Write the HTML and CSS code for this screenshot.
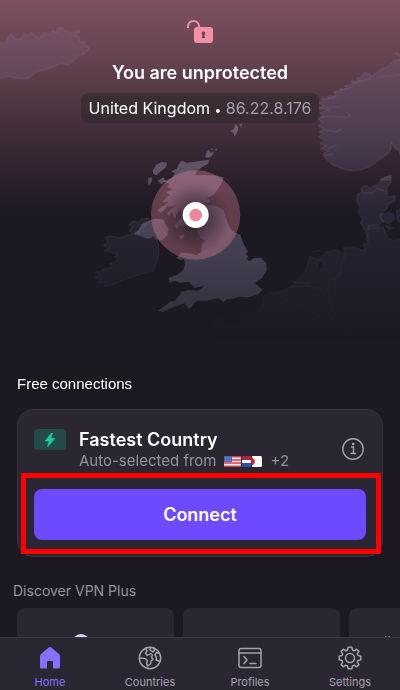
FILE: index.html
```
<!DOCTYPE html>
<html lang="en">

    <head>
        <meta charset="UTF-8">
        <meta name="viewport" content="width=device-width, initial-scale=1.0">
        <title>VPN</title>
        <link rel="stylesheet" href="styles.css">
    </head>

    <body>
        <div class="app">
            <main class="content">
                <svg class="map" viewBox="0 0 1200 1080" preserveAspectRatio="xMidYMin slice" aria-hidden="true">
                    <defs>
                        <linearGradient id="landFade" gradientUnits="userSpaceOnUse" x1="0" y1="0" x2="0" y2="1020">
                            <stop offset="0" stop-color="#fff" stop-opacity=".6" />
                            <stop offset=".4" stop-color="#fff" stop-opacity="1" />
                            <stop offset=".65" stop-color="#fff" stop-opacity=".6" />
                            <stop offset="1" stop-color="#fff" stop-opacity="0" />
                        </linearGradient>
                        <linearGradient id="ukFade" gradientUnits="userSpaceOnUse" x1="0" y1="450" x2="0" y2="990">
                            <stop offset="0" stop-color="#fff" stop-opacity="1" />
                            <stop offset=".6" stop-color="#fff" stop-opacity=".7" />
                            <stop offset="1" stop-color="#fff" stop-opacity=".35" />
                        </linearGradient>
                        <mask id="landMask" maskUnits="userSpaceOnUse" x="-10" y="0" width="1220" height="1080">
                            <rect x="-10" width="1220" height="1080" fill="url(#landFade)" />
                        </mask>
                        <mask id="ukMask" maskUnits="userSpaceOnUse" x="0" y="0" width="1200" height="1080">
                            <rect width="1200" height="1080" fill="url(#ukFade)" />
                        </mask>
                        <radialGradient id="shade">
                            <stop offset=".2" stop-color="#1c1924" stop-opacity=".65" />
                            <stop offset="1" stop-color="#1c1924" stop-opacity="0" />
                        </radialGradient>
                    </defs>

                    <g class="land" mask="url(#landMask)">
                        <!-- Iceland -->
                        <path d="M-5 126L16 132L22 112L34 102L46 118L58 119L72 100L84 106L92 98L106 106L116 118L132 98L148 102L160 92L170 100L172 86L186 82L196 92L214 98L240 92L224 106L240 112L236 124L256 124L250 132L268 142L262 154L248 158L254 162L240 166L218 184L204 194L180 192L140 208L112 214L84 236L60 237L26 230L-5 234Z" />
                        <!-- Norway and Sweden -->
                        <path d="M1205 166L1185 158L1205 176L1180 184L1162 200L1140 210L1128 222L1108 230L1112 222L1092 218L1084 232L1070 236L1078 244L1054 244L1060 254L1034 256L1042 266L1020 266L1026 278L1002 276L1008 288L982 288L988 298L966 294L972 306L956 308L972 318L956 324L990 330L958 338L974 348L955 356L966 366L954 378L972 386L958 396L970 402L956 410L976 420L960 430L978 438L960 446L990 452L970 460L976 474L996 494L1020 504L1050 512L1084 509L1110 500L1140 478L1162 462L1172 450L1174 426L1184 444L1196 450L1205 476Z" />
                        <path class="fjord" d="M956 326L1020 320M960 350L1040 352L1052 346L1040 336M974 390L1010 396L1030 384M984 446L1010 434M960 300L1010 290M1000 276L1060 262M1060 250L1110 236M1130 230L1205 224M974 466L1000 462" />
                        <path d="M1140 540L1150 532L1172 528L1168 540Z" />

                        <g transform="translate(600 480)">
                            <!-- Denmark -->
                            <path d="M502 248L500 222L492 208L482 190L488 176L474 160L480 140L470 124L474 100L486 98L482 84L496 76L510 84L534 74L544 58L574 46L572 68L560 82L562 100L560 112L586 108L584 124L566 130L560 148L546 156L540 170L552 184L534 196L510 194L502 206Z" />
                            <path d="M540 164L560 158L580 162L584 180L564 190L546 182ZM590 150L605 146L605 190L592 182ZM556 196L580 204L568 208Z" />
                            <!-- Continent -->
                            <path d="M605 236L580 242L564 234L554 214L550 202L506 196L504 228L508 250L490 252L494 272L464 262L430 262L436 282L410 270L376 276L360 292L372 318L360 332L352 314L362 300L330 290L318 330L296 358L272 380L236 396L204 400L190 412L188 440L160 458L130 484L100 496L66 494L64 474L44 474L50 520L40 545L605 545Z" />
                            <path class="fjord" d="M436 282L422 318L420 346L388 362L384 388L390 420L396 446L382 458L412 500L470 515M236 398L250 416L286 424L304 440L330 448L348 466L380 480M272 380L320 378L356 384L380 404M280 366L330 370M334 276L360 272M486 98L520 100L528 86M530 84L560 96M500 206L540 204" />
                        </g>

                        <!-- Ireland -->
                        <path transform="translate(240 330)" d="M160 372L146 362L160 350L145 346L156 334L176 336L184 326L204 324L212 330L196 350L180 358L176 376L204 384L224 380L236 400L237 430L228 462L220 484L190 490L160 500L130 510L100 524L72 528L78 518L54 518L64 508L45 504L60 494L46 486L70 484L66 478L96 474L88 462L112 452L104 440L116 436L100 430L72 422L90 414L70 406L84 396L76 382L96 378L120 384L142 376Z" />
                    </g>

                    <!-- United Kingdom -->
                    <g class="uk" mask="url(#ukMask)">
                        <g transform="translate(240 330)">
                            <path d="M305 152L320 158L345 155L388 149L384 162L368 170L350 184L344 195L400 196L432 202L424 222L408 245L396 258L380 264L392 272L386 278L364 280L358 286L374 284L410 288L430 300L440 330L450 355L464 368L480 373L490 400L504 425L496 430L506 440L500 446L508 454L522 444L542 443L558 458L561 480L546 504L524 520L548 540L535 553L505 562L480 560L460 566L440 568L430 577L415 565L380 572L352 572L342 578L335 592L325 596L314 580L290 588L265 598L250 606L234 602L258 586L268 576L285 572L300 555L305 545L325 540L356 542L374 526L345 534L325 515L300 518L284 512L270 518L265 505L290 495L308 482L315 466L312 448L300 450L290 443L304 428L330 430L350 436L364 426L366 402L376 392L360 382L352 366L350 350L336 346L322 340L310 352L298 346L290 356L284 346L300 328L308 312L300 300L290 312L284 326L276 306L266 318L260 310L274 296L290 285L275 290L262 288L254 300L242 308L232 300L250 288L266 275L246 276L268 256L258 246L278 238L260 230L270 222L248 214L274 206L285 190L274 184L290 176L298 160Z" />
                            <path d="M160 372L176 360L186 342L204 334L224 326L250 328L258 346L266 358L262 376L246 392L228 388L222 378L204 386L186 378Z" />
                            <path d="M218 182L228 164L246 156L262 158L256 174L240 186L230 196L220 192ZM204 206L214 200L216 212L206 228ZM232 212L250 202L258 214L244 222ZM378 130L386 120L392 128L402 126L396 138L386 144L376 142ZM394 114L400 118L394 120ZM404 118L412 116L408 124ZM452 64L462 56L466 42L474 50L474 62L464 80L460 68ZM478 44L488 40L484 52ZM296 380L310 372L314 378L304 388Z" />
                        </g>
                    </g>

                    <!-- Current location -->
                    <circle cx="587" cy="645" r="134" fill="#f08aa0" fill-opacity=".33" />
                    <circle cx="587" cy="655" r="105" fill="url(#shade)" />
                    <circle cx="587" cy="645" r="39" fill="#fff" />
                    <circle cx="587" cy="645" r="19" fill="#f0859c" />
                </svg>

                <section class="status">
                    <svg class="lock" viewBox="0 0 26 24" aria-hidden="true">
                        <path d="M1 8V6.500C1 3 3.500 1 6.500 1S12 3 12 6.500V8" fill="none" stroke="#f58fa5" stroke-width="2" />
                        <path fill="#f58fa5" fill-rule="evenodd" d="M10 7H23A3 3 0 0 1 26 10V20A3 3 0 0 1 23 23H10A3 3 0 0 1 7 20V10A3 3 0 0 1 10 7ZM16.500 11.500A1.900 1.900 0 0 0 15.500 15L14.800 18H18.200L17.500 15A1.900 1.900 0 0 0 16.500 11.500Z" />
                    </svg>
                    <h1>You are unprotected</h1>
                    <p class="location">United Kingdom <span class="dot">•</span> <span class="ip">86.22.8.176</span></p>
                </section>

                <section class="free">
                    <h2>Free connections</h2>
                    <div class="card">
                        <div class="server">
                            <span class="badge">
                                <svg viewBox="0 0 12 14" aria-hidden="true">
                                    <path d="M7.500 0L1 8H5L3.500 14L11 5.500H7L8.500 0Z" fill="#1ec997" stroke="#1ec997" stroke-width=".6" stroke-linejoin="round" />
                                </svg>
                            </span>
                            <div class="info">
                                <h3>Fastest Country</h3>
                                <p>Auto-selected from
                                    <svg class="flags" viewBox="0 0 38 11" aria-hidden="true">
                                        <rect width="17" height="11" rx="1" fill="#f4f1f4" />
                                        <path d="M0 .8H17M0 4H17M0 7H17M0 10.200H17" stroke="#e0384d" stroke-width="1.600" />
                                        <rect width="8" height="6" fill="#4965b5" />
                                        <path d="M1 1.500H7M1 3H7M1 4.500H7" stroke="#a7b4dc" stroke-width=".6" stroke-dasharray=".8 1" />
                                        <path d="M18 0H27V4H18Z" fill="#b5203b" />
                                        <path d="M18 4H27V7H18Z" fill="#fff" />
                                        <path d="M18 7H27V11H18Z" fill="#2456ad" />
                                        <path d="M28 0H36.500A1.500 1.500 0 0 1 38 1.500V9.500A1.500 1.500 0 0 1 36.500 11H28Z" fill="#fff" />
                                        <path d="M28 2A3.700 3.700 0 0 1 28 9Z" fill="#e0253e" stroke="#e0253e" />
                                    </svg>
                                    +2
                                </p>
                            </div>
                            <button type="button" class="details" aria-label="Details">
                                <svg viewBox="0 0 22 22" fill="none" stroke="#a5a2ae" stroke-width="1.400">
                                    <circle cx="11" cy="11" r="10.200" />
                                    <path d="M9 9H11.500V15.500M8.500 15.500H14" />
                                    <circle cx="11.200" cy="6" r=".6" fill="#a5a2ae" />
                                </svg>
                            </button>
                        </div>
                        <div class="action">
                            <button type="button" class="connect">Connect</button>
                            <div class="highlight"></div>
                        </div>
                    </div>
                </section>

                <section class="plus">
                    <h2>Discover VPN Plus</h2>
                    <div class="tiles">
                        <div class="tile">
                            <svg viewBox="0 0 18 18" aria-hidden="true">
                                <circle cx="9" cy="9" r="9" fill="#e3ccf8" />
                                <circle cx="9" cy="11" r="8" fill="#bb91ee" />
                            </svg>
                        </div>
                        <div class="tile"></div>
                        <div class="tile">
                            <svg viewBox="0 0 18 18" aria-hidden="true">
                                <path d="M4 2L6 3L9 2V4H4Z" fill="#8b8894" />
                            </svg>
                        </div>
                    </div>
                </section>
            </main>

            <nav class="tabs">
                <a href="#home" class="tab active">
                    <svg viewBox="0 0 24 24" aria-hidden="true">
                        <path fill="currentColor" d="M12 1Q12.700 1 13.300 1.500L21 8Q22 8.800 22 10V21.500Q22 22.500 21 22.500H15V16Q15 15 14 15H10Q9 15 9 16V22.500H3Q2 22.500 2 21.500V10Q2 8.800 3 8L10.700 1.500Q11.300 1 12 1Z" />
                    </svg>
                    Home
                </a>
                <a href="#countries" class="tab">
                    <svg viewBox="0 0 24 24" fill="none" stroke="currentColor" stroke-width="1.500" stroke-linejoin="round" aria-hidden="true">
                        <circle cx="12" cy="12" r="10.700" />
                        <path d="M7.500 2.500L9 5L7.500 7.500L9.500 9.500L12.500 7.500L14.500 9L13.500 11L15 13.500L13 15L12.500 18L9.500 20L8.500 17L9.500 14.500L7 12.500L1.500 12M12.500 1.500L12 4L15 6L16.500 4L15.500 1.800M21.500 7.500L18.500 6.500L17 9L18.500 11.500L18 14L22 15.500" />
                    </svg>
                    Countries
                </a>
                <a href="#profiles" class="tab">
                    <svg viewBox="0 0 24 24" fill="none" stroke="currentColor" stroke-width="1.500" stroke-linecap="round" stroke-linejoin="round" aria-hidden="true">
                        <rect x="1" y="2.500" width="22" height="19" rx="2" />
                        <path d="M1 7H23M6 10.500L9 14L6 17.500M12 17.500H18" />
                    </svg>
                    Profiles
                </a>
                <a href="#settings" class="tab">
                    <svg viewBox="0 0 24 24" fill="none" stroke="currentColor" stroke-width="1.500" stroke-linejoin="round" aria-hidden="true">
                        <path d="M10.200 1.200H13.800L14.500 4L16.300 4.800L18.700 3.200L20.900 5.400L19.300 7.800L20 9.600L22.800 10.200V13.800L20 14.400L19.300 16.200L20.900 18.600L18.700 20.800L16.300 19.200L14.500 20L13.800 22.800H10.200L9.500 20L7.700 19.200L5.300 20.800L3.100 18.600L4.700 16.200L4 14.400L1.200 13.800V10.200L4 9.600L4.700 7.800L3.100 5.400L5.300 3.200L7.700 4.800L9.500 4Z" />
                        <circle cx="12" cy="12" r="4.500" />
                    </svg>
                    Settings
                </a>
            </nav>
        </div>
    </body>

</html>
```
FILE: styles.css
```
* {
    box-sizing: border-box;
}

body {
    margin: 0;
    background: #1c1923;
    color: #fff;
    font-family: Inter, "Liberation Sans", sans-serif;
}

h1, h2, h3, p {
    margin: 0;
}

button {
    border: 0;
    padding: 0;
    font-family: inherit;
    color: inherit;
    cursor: pointer;
}

svg {
    display: block;
}

.app {
    display: flex;
    flex-direction: column;
    height: 100vh;
}

.content {
    position: relative;
    flex: 1;
    min-height: 0;
    overflow: hidden;
    background: linear-gradient(#7e5060 0, #5f404c 70px, #3a2a36 145px, #2e212c 175px, #1c1923 212px);
}

/* Map sits behind the status and fades out */
.map {
    position: absolute;
    top: 0;
    left: 0;
    width: 100%;
    height: 360px;
}

.land {
    fill: rgba(138, 134, 190, 0.18);
    stroke: rgba(190, 170, 195, 0.2);
    stroke-width: 3;
}

.fjord {
    fill: none;
}

.uk {
    fill: rgba(167, 160, 195, 0.4);
}

.status {
    position: relative;
    display: flex;
    flex-direction: column;
    align-items: center;
    height: 372px;
    padding-top: 20px;
}

.lock {
    width: 26px;
    height: 24px;
}

.status h1 {
    margin-top: 17px;
    font-size: 18px;
    font-weight: 600;
    line-height: 24px;
}

.location {
    margin-top: 8px;
    padding: 0 8px;
    border-radius: 8px;
    background: rgba(50, 42, 46, 0.7);
    font-size: 16px;
    line-height: 30px;
}

.dot {
    font-size: 12px;
    line-height: 1;
}

.ip {
    color: #a59fb0;
}

.free {
    position: relative;
    padding: 0 17px;
}

.free h2 {
    font-family: "Liberation Sans", Arial, sans-serif;
    font-size: 15px;
    font-weight: 400;
    line-height: 24px;
}

.card {
    margin-top: 13px;
    padding: 16px;
    border: 1px solid #363341;
    border-radius: 16px;
    background: #2a2733;
}

.server {
    display: flex;
    align-items: center;
    height: 46px;
}

.badge {
    display: flex;
    align-items: center;
    justify-content: center;
    align-self: flex-start;
    width: 32px;
    height: 21px;
    margin-top: 3px;
    border-radius: 4px;
    background: #254a4a;
}

.badge svg {
    width: 12px;
    height: 14px;
}

.info {
    flex: 1;
    margin-left: 13px;
    padding-top: 2px;
}

.info h3 {
    font-size: 18px;
    font-weight: 600;
    line-height: 22px;
}

.info p {
    display: flex;
    align-items: center;
    gap: 8px;
    color: #95929f;
    font-size: 15px;
    line-height: 20px;
}

.flags {
    width: 38px;
    height: 11px;
}

.details {
    background: none;
    margin-right: 2px;
}

.details svg {
    width: 22px;
    height: 22px;
}

.action {
    position: relative;
    margin-top: 17px;
}

.connect {
    display: block;
    width: 100%;
    height: 51px;
    border-radius: 8px;
    background: #6d4aff;
    font-size: 18px;
    font-weight: 600;
}

/* Frame drawn over the card around the main action */
.highlight {
    position: absolute;
    inset: -16px -15px -14px -13px;
    border: 5px solid #f00;
    pointer-events: none;
}

.plus {
    margin-top: 24px;
}

.plus h2 {
    padding-left: 13px;
    color: #95929f;
    font-size: 14px;
    font-weight: 400;
    line-height: 20px;
}

.tiles {
    display: flex;
    gap: 9px;
    margin-top: 7px;
    padding-left: 17px;
}

.tile {
    flex: none;
    width: 157px;
    height: 120px;
    padding: 26px 0 0 55px;
    border-radius: 8px;
    background: #2a2733;
}

.tile:last-child {
    padding-left: 32px;
}

.tile svg {
    width: 18px;
    height: 18px;
}

.tabs {
    display: grid;
    grid-template-columns: repeat(4, 1fr);
    height: 53px;
    border-top: 1px solid #3b3843;
    background: #2a2733;
}

.tab {
    display: flex;
    flex-direction: column;
    align-items: center;
    gap: 4px;
    padding-top: 8px;
    color: #a5a2ae;
    font-size: 11px;
    line-height: 16px;
    text-decoration: none;
}

.tab svg {
    width: 24px;
    height: 24px;
}

.active {
    color: #8a6eff;
}
```
